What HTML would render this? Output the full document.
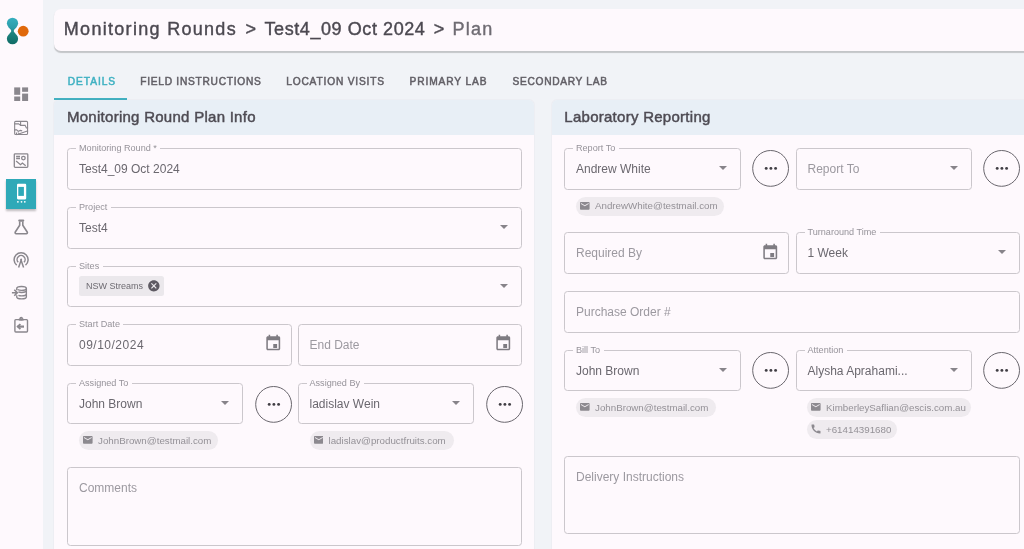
<!DOCTYPE html>
<html><head><meta charset="utf-8">
<style>
*{box-sizing:border-box;margin:0;padding:0}
html,body{width:1024px;height:549px;overflow:hidden;background:#f1f3f7;font-family:"Liberation Sans",sans-serif;position:relative}
body{will-change:transform}
.abs{position:absolute}
#side{position:absolute;left:0;top:0;width:42.5px;height:549px;background:#fef9fd}
.ico{position:absolute;width:18px;height:18px;left:12px}
#hdr{position:absolute;left:53.8px;top:9px;width:1000px;height:42px;background:#fef9fd;border-radius:7px;box-shadow:0 1.7px 1px rgba(0,0,0,0.19)}
.crumb{position:absolute;top:19px;font-size:18px;line-height:20px;color:#4c4951;-webkit-text-stroke:0.4px currentColor;white-space:nowrap}
.tab{position:absolute;top:76.4px;font-size:10.2px;color:#625f66;-webkit-text-stroke:0.5px #625f66;white-space:nowrap}
.panel{position:absolute;top:100px;height:460px;background:#fef9fd;border-radius:5px 5px 0 0;box-shadow:0 0 1.2px rgba(60,40,60,0.16);overflow:hidden}
.ph{position:absolute;left:0;top:0;right:0;height:35.4px;background:#e8eff6}
.ph span{position:absolute;left:12.8px;top:8px;font-size:15px;color:#4e4b53;letter-spacing:0.27px;-webkit-text-stroke:0.45px #4e4b53;white-space:nowrap}
.f{position:absolute;border:1px solid #cbc7cc;border-radius:3.5px;height:41.8px}
.lbl{position:absolute;left:8px;top:-6px;padding:0 3.5px 0 3px;background:#fef9fd;font-size:9.1px;color:#96939a;white-space:nowrap;line-height:11px}
.val{position:absolute;left:11px;top:13px;font-size:12px;color:#6b686f;white-space:nowrap;line-height:14px}
.ph2{color:#9c99a0}
.arr{position:absolute;right:13px;top:17.2px;width:0;height:0;border-left:4.1px solid transparent;border-right:4.1px solid transparent;border-top:4.3px solid #87848a}
.cal{position:absolute;right:8.3px;top:9px;width:18.5px;height:18.5px}
.btn{position:absolute;width:36px;height:36px;border:1px solid #5e5b62;border-radius:50%}
.btn i{position:absolute;top:15.6px;width:3px;height:3px;border-radius:50%;background:#3f3d43}
.chip{position:absolute;height:19px;border-radius:9.5px;background:#efebef;white-space:nowrap}
.chip span{position:absolute;left:19px;top:3.8px;font-size:9.75px;color:#949197;line-height:11px}
.schip{position:absolute;left:11px;top:9.8px;width:85px;height:19.5px;border-radius:2.5px;background:#ebe8ec}
.schip span{position:absolute;left:7px;top:4.5px;font-size:9px;color:#6e6b72;white-space:nowrap;line-height:11px}
.chip svg{position:absolute;left:4px;top:4.5px}
</style></head><body>
<div id="side">
  <!-- logo -->
  <svg class="abs" style="left:0;top:10px" width="36" height="40" viewBox="0 10 36 40">
    <defs>
      <linearGradient id="lg1" gradientUnits="userSpaceOnUse" x1="0" y1="17.7" x2="0" y2="44.3"><stop offset="0" stop-color="#36afbf"/><stop offset="0.38" stop-color="#2b9ca9"/><stop offset="0.55" stop-color="#1e8581"/><stop offset="1" stop-color="#0f6b65"/></linearGradient>
    </defs>
    <g fill="url(#lg1)">
    <circle cx="12.5" cy="23.3" r="5.6"/><circle cx="12.5" cy="38.7" r="5.6"/>
    <path d="M8.8 27.5C10.5 29.3 11.2 30.2 11.2 31C11.2 31.8 10.5 32.7 8.8 34.5L16.2 34.5C14.5 32.7 13.8 31.8 13.8 31C13.8 30.2 14.5 29.3 16.2 27.5Z"/>
    </g>
    <circle cx="23.2" cy="31.2" r="5.4" fill="#e0690b"/>
  </svg>
  <svg class="abs" style="left:6px;top:80px" width="30" height="30" viewBox="0 0 30 30" fill="#8a878d">
    <rect x="8.2" y="7.4" width="6" height="7.4"/><rect x="16.1" y="7.4" width="6" height="4.4"/>
    <rect x="8.2" y="16.5" width="6" height="4.5"/><rect x="16.1" y="13.6" width="6" height="7.4"/>
  </svg>
  <svg class="abs" style="left:6px;top:113px" width="30" height="30" viewBox="0 0 30 30" fill="none" stroke="#8a878d" stroke-width="1.1">
    <rect x="8.65" y="8.35" width="12.9" height="13.2" rx="1"/>
    <path d="M8.2 10.9h4.5l1.5 1.2M14.6 7.9v4.5l4.5-.2 1.3 2.8 1.7-.1M8.2 16.9h2.5l1.5 1.5 2-1 2 .5M10.5 21.7l11.6-4M10.5 19.5v2.2M13 20.6l-1.2-1"/>
  </svg>
  <svg class="abs" style="left:6px;top:145px" width="30" height="30" viewBox="0 0 30 30" fill="none" stroke="#8a878d" stroke-width="1.3">
    <rect x="8.3" y="8.8" width="13.5" height="13.6" rx="0.8"/>
    <path d="M10.1 11.5h3.9M10.1 13.5h3.9"/>
    <circle cx="17.4" cy="13.1" r="1.8"/>
    <path d="M10.1 16.1l4.4 3.6 1.9-1.7 3.3 2.7"/>
  </svg>
  <div class="abs" style="left:6px;top:179px;width:30px;height:30px;background:#2fa9b8;box-shadow:0 1.5px 2px rgba(0,0,0,0.25)">
    <svg class="abs" style="left:0;top:0" width="30" height="30" viewBox="0 0 30 30">
      <rect x="11" y="4.8" width="9.2" height="15.6" rx="1.1" fill="#fff"/><rect x="12.3" y="7.9" width="5.6" height="9" fill="#2fa9b8"/>
      <circle cx="11.9" cy="22.8" r="0.9" fill="#fff"/><circle cx="15.5" cy="22.8" r="0.9" fill="#fff"/><circle cx="18.8" cy="22.8" r="0.9" fill="#fff"/>
    </svg>
  </div>
  <svg class="abs" style="left:6px;top:212px" width="30" height="30" viewBox="0 0 30 30" fill="none" stroke="#8a878d" stroke-width="1.6" stroke-linejoin="round">
    <path d="M13.3 8.55H17.2" stroke-width="2.2" stroke-linecap="round"/>
    <path d="M13.7 9.5V13.2L9.3 20C8.8 20.9 9.2 21.7 10.2 21.7H20.3C21.3 21.7 21.7 20.9 21.2 20L16.8 13.2V9.5"/>
  </svg>
  <svg class="abs" style="left:6px;top:245px" width="30" height="30" viewBox="0 0 30 30" fill="none" stroke="#8a878d" stroke-width="1.5">
    <path d="M10.7 20.2a7 7 0 1 1 8.8 0"/>
    <path d="M12.2 17.3a4 4 0 1 1 5.8 0"/>
    <path d="M12.6 22.4L15.1 15.2 17.6 22.4"/>
    <circle cx="15.1" cy="14.8" r="1" fill="#8a878d" stroke="none"/>
  </svg>
  <svg class="abs" style="left:6px;top:278px" width="30" height="30" viewBox="0 0 30 30" fill="none" stroke="#8a878d" stroke-width="1.4">
    <path d="M10.75 12.2V10.4c0-1.1 2.15-1.85 4.8-1.85s4.8.75 4.8 1.85v8.6c0 1.1-2.15 1.85-4.8 1.85s-4.8-.75-4.8-1.85v-1.7"/>
    <path d="M11.6 11.5c.8.5 2.2.85 3.95.85 2.65 0 4.8-.75 4.8-1.85"/>
    <path d="M12.4 13.9c.8.35 1.9.55 3.15.55 2.65 0 4.8-.75 4.8-1.85M12.4 17.3c.8.35 1.9.55 3.15.55 2.65 0 4.8-.75 4.8-1.85"/>
    <path d="M5.9 14.7h4.6M8.3 11.7l3 3-3 3" stroke-width="1.6"/>
  </svg>
  <svg class="abs" style="left:6px;top:311px" width="30" height="30" viewBox="0 0 30 30" fill="none" stroke="#8a878d" stroke-width="1.4">
    <rect x="8.9" y="8.6" width="12.6" height="12.4" rx="0.9"/>
    <path d="M12.8 8.6h4.8" stroke-width="2"/>
    <circle cx="15.2" cy="7.6" r="1.1"/>
    <path d="M11.6 15.6h6.4" stroke-width="2.2"/>
    <path d="M14.4 13.1l-2.7 2.5 2.7 2.5" stroke-width="1.8"/>
  </svg>

</div>

<div id="hdr"></div>
<div class="crumb" style="left:63.8px;letter-spacing:1.3px">Monitoring Rounds</div>
<div class="crumb" style="left:245.5px">&gt;</div>
<div class="crumb" style="left:264.5px;letter-spacing:0.58px">Test4_09 Oct 2024</div>
<div class="crumb" style="left:433.7px">&gt;</div>
<div class="crumb" style="left:452.5px;letter-spacing:1.25px;color:#6f6c73">Plan</div>

<div class="tab" style="left:67.8px;color:#3fb1c2;-webkit-text-stroke-color:#3fb1c2;letter-spacing:0.93px">DETAILS</div>
<div class="tab" style="left:140.2px;letter-spacing:0.741px">FIELD INSTRUCTIONS</div>
<div class="tab" style="left:286.2px;letter-spacing:0.82px">LOCATION VISITS</div>
<div class="tab" style="left:409.6px;letter-spacing:0.876px">PRIMARY LAB</div>
<div class="tab" style="left:512.6px;letter-spacing:0.678px">SECONDARY LAB</div>
<div class="abs" style="left:54.3px;top:98px;width:72.7px;height:2px;background:#43b1c1"></div>

<!-- LEFT PANEL -->
<div class="panel" style="left:54.2px;width:479.9px">
  <div class="ph"><span>Monitoring Round Plan Info</span></div>
</div>

<!-- RIGHT PANEL -->
<div class="panel" style="left:551.5px;width:500px">
  <div class="ph"><span>Laboratory Reporting</span></div>
</div>


<!-- LEFT FIELDS -->
<div class="f" style="left:67px;top:148px;width:455px"><span class="lbl">Monitoring Round *</span><span class="val">Test4_09 Oct 2024</span></div>
<div class="f" style="left:67px;top:207px;width:455px"><span class="lbl">Project</span><span class="val">Test4</span><i class="arr"></i></div>
<div class="f" style="left:67px;top:265.5px;width:455px"><span class="lbl">Sites</span><i class="arr"></i>
  <div class="schip"><span>NSW Streams</span><svg width="13.7" height="13.7" viewBox="0 0 24 24" style="position:absolute;left:68px;top:2.9px"><path fill="#5e5a63" d="M12 2C6.47 2 2 6.47 2 12s4.47 10 10 10 10-4.47 10-10S17.53 2 12 2zm5 13.59L15.59 17 12 13.41 8.41 17 7 15.59 10.59 12 7 8.41 8.41 7 12 10.59 15.59 7 17 8.41 13.41 12 17 15.59z"/></svg></div>
</div>
<div class="f" style="left:67px;top:324.2px;width:224.5px"><span class="lbl">Start Date</span><span class="val" style="letter-spacing:0.5px">09/10/2024</span><svg class="cal" viewBox="0 0 24 24"><path fill="#7f7c82" d="M19 3h-1V1h-2v2H8V1H6v2H5c-1.11 0-2 .9-2 2v14c0 1.1.89 2 2 2h14c1.1 0 2-.9 2-2V5c0-1.1-.9-2-2-2zm0 16H5V8h14v11zM12 13h5v5h-5z"/></svg></div>
<div class="f" style="left:297.5px;top:324.2px;width:224.5px"><span class="val ph2">End Date</span><svg class="cal" viewBox="0 0 24 24"><path fill="#7f7c82" d="M19 3h-1V1h-2v2H8V1H6v2H5c-1.11 0-2 .9-2 2v14c0 1.1.89 2 2 2h14c1.1 0 2-.9 2-2V5c0-1.1-.9-2-2-2zm0 16H5V8h14v11zM12 13h5v5h-5z"/></svg></div>
<div class="f" style="left:67px;top:382.5px;width:175.5px"><span class="lbl">Assigned To</span><span class="val">John Brown</span><i class="arr"></i></div>
<div class="f" style="left:297.5px;top:382.5px;width:176px"><span class="lbl">Assigned By</span><span class="val">ladislav Wein</span><i class="arr"></i></div>
<div class="chip" style="left:79px;top:431px;width:139px"><svg width="9.6" height="9.6" viewBox="2 2 20 20" style="left:4.3px;top:4.1px"><path fill="#8c898f" d="M20 4H4c-1.1 0-1.99.9-1.99 2L2 18c0 1.1.9 2 2 2h16c1.1 0 2-.9 2-2V6c0-1.1-.9-2-2-2zm0 4l-8 5-8-5V6l8 5 8-5v2z"/></svg><span>JohnBrown@testmail.com</span></div>
<div class="chip" style="left:309.5px;top:431px;width:144.5px"><svg width="9.6" height="9.6" viewBox="2 2 20 20" style="left:4.3px;top:4.1px"><path fill="#8c898f" d="M20 4H4c-1.1 0-1.99.9-1.99 2L2 18c0 1.1.9 2 2 2h16c1.1 0 2-.9 2-2V6c0-1.1-.9-2-2-2zm0 4l-8 5-8-5V6l8 5 8-5v2z"/></svg><span>ladislav@productfruits.com</span></div>
<div class="f" style="left:67px;top:467.2px;width:455px;height:78.6px"><span class="val ph2" style="top:13px">Comments</span></div>

<!-- RIGHT FIELDS -->
<div class="f" style="left:564px;top:148px;width:176.5px"><span class="lbl">Report To</span><span class="val">Andrew White</span><i class="arr"></i></div>
<div class="f" style="left:795.5px;top:148px;width:176.5px"><span class="val ph2">Report To</span><i class="arr"></i></div>
<div class="chip" style="left:576px;top:196.5px;width:148px"><svg width="9.6" height="9.6" viewBox="2 2 20 20" style="left:4.3px;top:4.1px"><path fill="#8c898f" d="M20 4H4c-1.1 0-1.99.9-1.99 2L2 18c0 1.1.9 2 2 2h16c1.1 0 2-.9 2-2V6c0-1.1-.9-2-2-2zm0 4l-8 5-8-5V6l8 5 8-5v2z"/></svg><span>AndrewWhite@testmail.com</span></div>
<div class="f" style="left:564px;top:232.2px;width:224.5px"><span class="val ph2">Required By</span><svg class="cal" style="top:10px" viewBox="0 0 24 24"><path fill="#7f7c82" d="M19 3h-1V1h-2v2H8V1H6v2H5c-1.11 0-2 .9-2 2v14c0 1.1.89 2 2 2h14c1.1 0 2-.9 2-2V5c0-1.1-.9-2-2-2zm0 16H5V8h14v11zM12 13h5v5h-5z"/></svg></div>
<div class="f" style="left:795.5px;top:232.2px;width:224.5px"><span class="lbl">Turnaround Time</span><span class="val">1 Week</span><i class="arr"></i></div>
<div class="f" style="left:564px;top:291px;width:456px"><span class="val ph2">Purchase Order #</span></div>
<div class="f" style="left:564px;top:349.5px;width:176.5px"><span class="lbl">Bill To</span><span class="val">John Brown</span><i class="arr"></i></div>
<div class="f" style="left:795.5px;top:349.5px;width:176.5px"><span class="lbl">Attention</span><span class="val">Alysha Aprahami...</span><i class="arr"></i></div>
<div class="chip" style="left:576px;top:398px;width:140px"><svg width="9.6" height="9.6" viewBox="2 2 20 20" style="left:4.3px;top:4.1px"><path fill="#8c898f" d="M20 4H4c-1.1 0-1.99.9-1.99 2L2 18c0 1.1.9 2 2 2h16c1.1 0 2-.9 2-2V6c0-1.1-.9-2-2-2zm0 4l-8 5-8-5V6l8 5 8-5v2z"/></svg><span>JohnBrown@testmail.com</span></div>
<div class="chip" style="left:807px;top:398px;width:164px"><svg width="9.6" height="9.6" viewBox="2 2 20 20" style="left:4.3px;top:4.1px"><path fill="#8c898f" d="M20 4H4c-1.1 0-1.99.9-1.99 2L2 18c0 1.1.9 2 2 2h16c1.1 0 2-.9 2-2V6c0-1.1-.9-2-2-2zm0 4l-8 5-8-5V6l8 5 8-5v2z"/></svg><span>KimberleySaflian@escis.com.au</span></div>
<div class="chip" style="left:807px;top:419.9px;width:90px"><svg width="10" height="10" viewBox="2 2 20 20"><path fill="#8c898f" d="M20.01 15.38c-1.23 0-2.42-.2-3.53-.56-.35-.12-.74-.03-1.01.24l-1.57 1.97c-2.83-1.35-5.48-3.9-6.89-6.83l1.95-1.66c.27-.28.35-.67.24-1.02-.37-1.11-.56-2.3-.56-3.53 0-.54-.45-.99-.99-.99H4.19C3.65 3 3 3.24 3 3.99 3 13.28 10.73 21 20.01 21c.71 0 .99-.63.99-1.18v-3.45c0-.54-.45-.99-.99-.99z"/></svg><span>+61414391680</span></div>
<div class="f" style="left:564px;top:456.2px;width:456px;height:78.3px"><span class="val ph2" style="top:13px">Delivery Instructions</span></div>
<!-- BUTTONS -->
<svg class="abs" style="left:255.2px;top:385.9px" width="37" height="37" viewBox="0 0 37 37"><circle cx="18.6" cy="18.4" r="17.9" fill="none" stroke="#69666d" stroke-width="1"/><circle cx="14.2" cy="18.4" r="1.45" fill="#403e44"/><circle cx="18.9" cy="18.4" r="1.45" fill="#403e44"/><circle cx="23.6" cy="18.4" r="1.45" fill="#403e44"/></svg>
<svg class="abs" style="left:485.6px;top:385.9px" width="37" height="37" viewBox="0 0 37 37"><circle cx="18.6" cy="18.4" r="17.9" fill="none" stroke="#69666d" stroke-width="1"/><circle cx="14.2" cy="18.4" r="1.45" fill="#403e44"/><circle cx="18.9" cy="18.4" r="1.45" fill="#403e44"/><circle cx="23.6" cy="18.4" r="1.45" fill="#403e44"/></svg>
<svg class="abs" style="left:752.3px;top:149.9px" width="37" height="37" viewBox="0 0 37 37"><circle cx="18.6" cy="18.4" r="17.9" fill="none" stroke="#69666d" stroke-width="1"/><circle cx="14.2" cy="18.4" r="1.45" fill="#403e44"/><circle cx="18.9" cy="18.4" r="1.45" fill="#403e44"/><circle cx="23.6" cy="18.4" r="1.45" fill="#403e44"/></svg>
<svg class="abs" style="left:983.4px;top:149.9px" width="37" height="37" viewBox="0 0 37 37"><circle cx="18.6" cy="18.4" r="17.9" fill="none" stroke="#69666d" stroke-width="1"/><circle cx="14.2" cy="18.4" r="1.45" fill="#403e44"/><circle cx="18.9" cy="18.4" r="1.45" fill="#403e44"/><circle cx="23.6" cy="18.4" r="1.45" fill="#403e44"/></svg>
<svg class="abs" style="left:752.3px;top:352.2px" width="37" height="37" viewBox="0 0 37 37"><circle cx="18.6" cy="18.4" r="17.9" fill="none" stroke="#69666d" stroke-width="1"/><circle cx="14.2" cy="18.4" r="1.45" fill="#403e44"/><circle cx="18.9" cy="18.4" r="1.45" fill="#403e44"/><circle cx="23.6" cy="18.4" r="1.45" fill="#403e44"/></svg>
<svg class="abs" style="left:983.4px;top:352.2px" width="37" height="37" viewBox="0 0 37 37"><circle cx="18.6" cy="18.4" r="17.9" fill="none" stroke="#69666d" stroke-width="1"/><circle cx="14.2" cy="18.4" r="1.45" fill="#403e44"/><circle cx="18.9" cy="18.4" r="1.45" fill="#403e44"/><circle cx="23.6" cy="18.4" r="1.45" fill="#403e44"/></svg>
</body></html>
